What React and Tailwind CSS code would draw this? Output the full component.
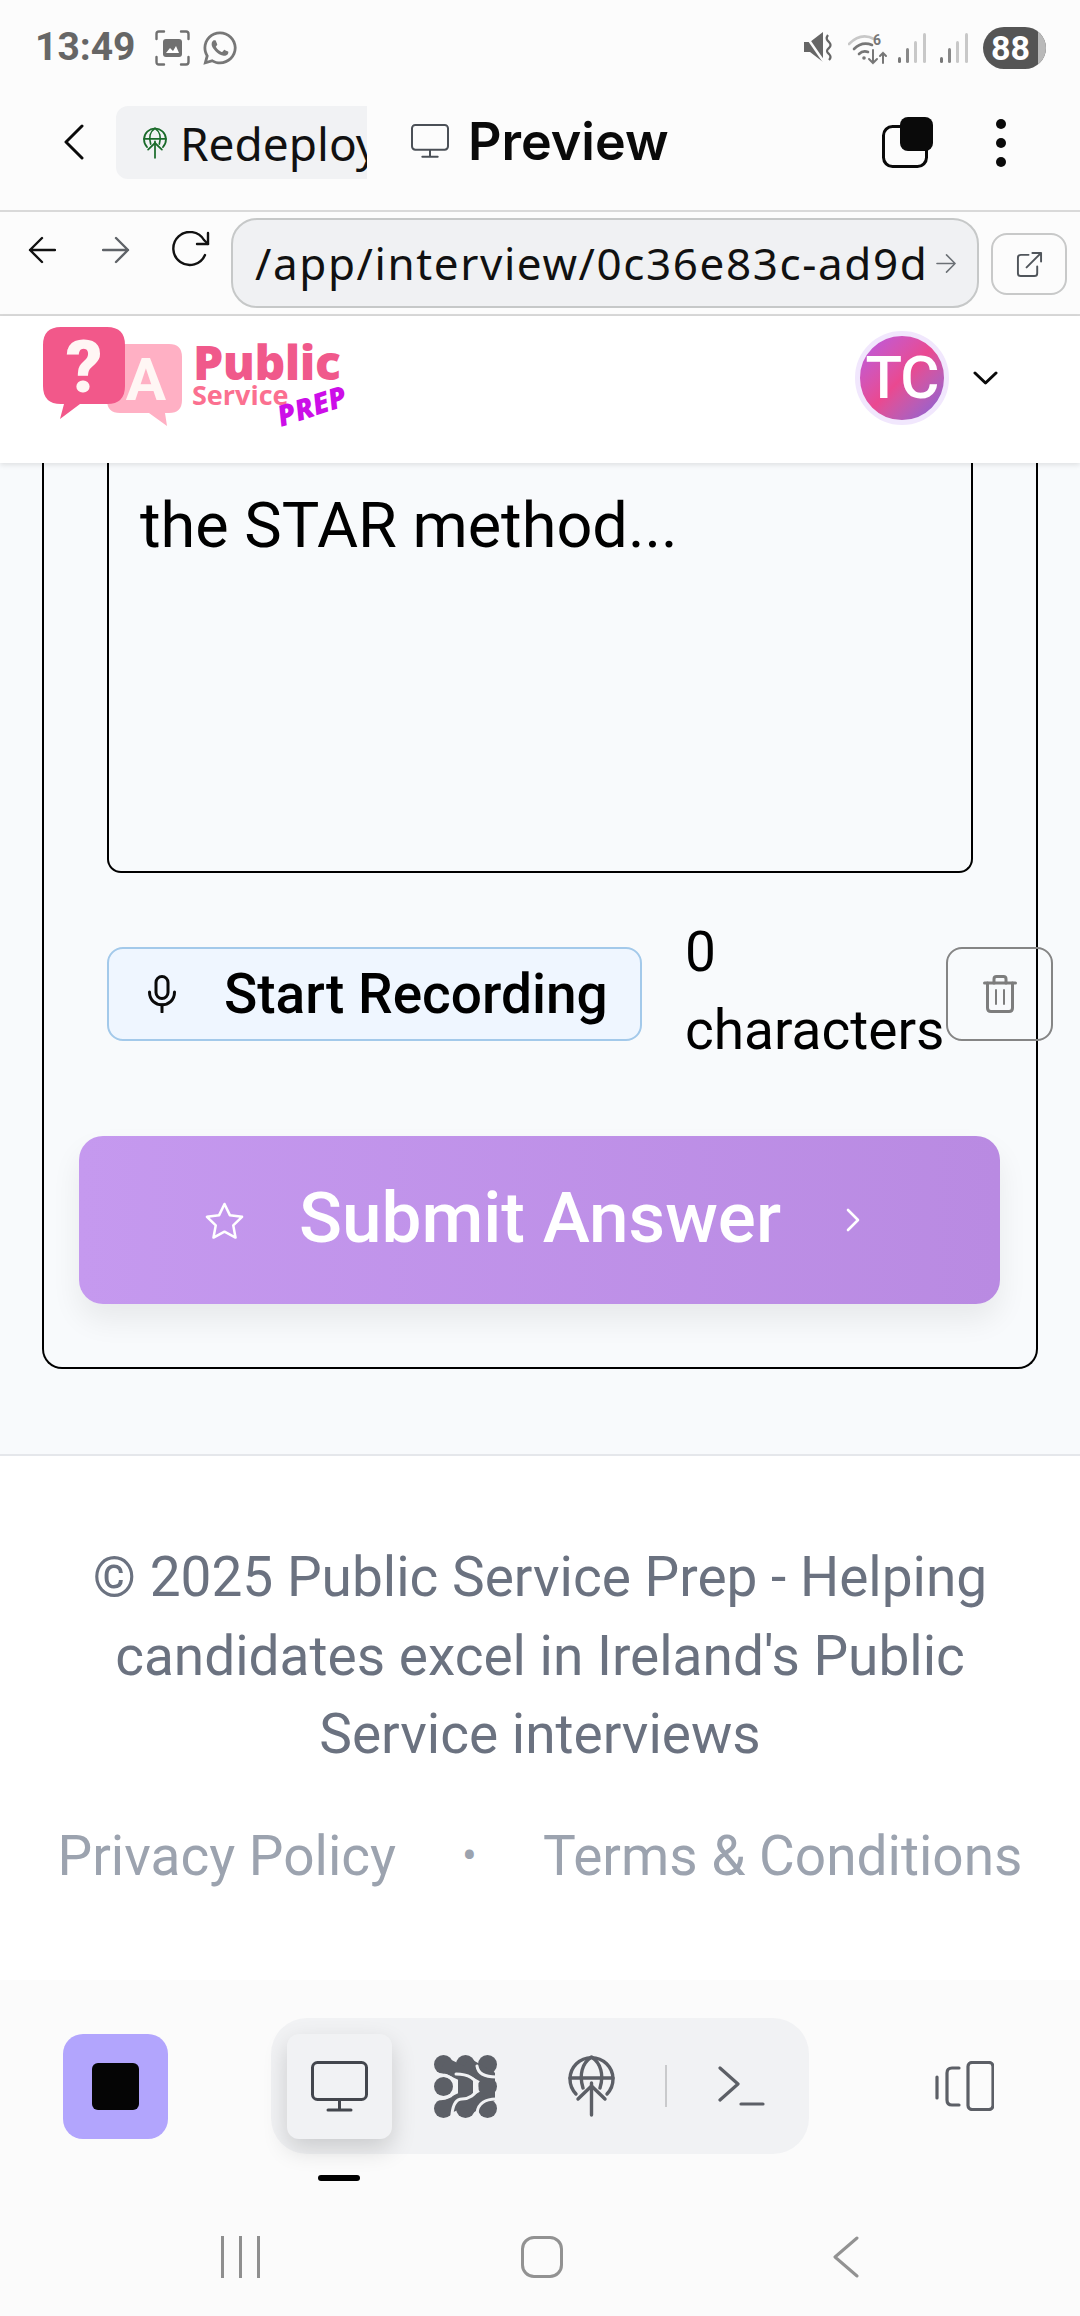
import React from 'react';
import { FaWhatsapp } from 'react-icons/fa';

const GlobeUp = ({ color, className }) => (
  <svg viewBox="0 0 47 62" className={className} fill="none" stroke={color} strokeWidth="3.4" strokeLinecap="round" strokeLinejoin="round">
    <path d="M8 39A21.5 21.5 0 1 1 39 39" />
    <path d="M2 23H45" />
    <path d="M15 33C11 20 14 8 23.5 2C33 8 36 20 32 33" />
    <path d="M23.5 60V28" />
    <path d="M10 44L23.5 31L37 44" />
  </svg>
);

const Monitor = ({ color, className, width = 3 }) => (
  <svg viewBox="0 0 57 51" className={className} fill="none" stroke={color} strokeWidth={width} strokeLinecap="round" strokeLinejoin="round">
    <rect x="1.5" y="1.5" width="54" height="37" rx="5" />
    <path d="M28.5 39V48" />
    <path d="M17 49H40" />
  </svg>
);

const StatusBar = () => (
  <div className="h-[70px] flex items-start pt-[27px] pl-[35px]">
    <span className="w-[100px] h-[41px] flex items-center text-[39px] font-bold text-[#666666] whitespace-nowrap font-['Roboto',sans-serif]">13:49</span>
    <svg viewBox="0 0 35 36" className="w-[35px] h-[36px] ml-[20px] mt-[3px]" fill="none" stroke="#707070" strokeWidth="2.4" strokeLinecap="round">
      <path d="M1.5 9V4Q1.5 1.5 4 1.5H9M26 1.5H31Q33.5 1.5 33.5 4V9M33.5 27V32Q33.5 34.5 31 34.5H26M9 34.5H4Q1.5 34.5 1.5 32V27" />
      <rect x="8" y="9" width="19" height="18" rx="3" fill="#707070" stroke="none" />
      <path d="M11 23L15 18L18 21L21 16L24 23Z" fill="#ffffff" stroke="none" />
    </svg>
    <FaWhatsapp className="w-[38px] h-[38px] ml-[11px] mt-[2px] text-[#777777]" />

    <div className="ml-auto flex items-start">
      <svg viewBox="0 0 30 30" className="w-[30px] h-[30px] mt-[5px]" fill="#666666">
        <path d="M0 10H6L19 0V30L6 20H0Z" />
        <path d="M0 1L20 30" stroke="#fcfcfc" strokeWidth="2.5" />
        <path d="M24 3Q21 7 25 10Q28 13 25 16Q21 19 25 22Q28 25 25 28" fill="none" stroke="#666666" strokeWidth="2.2" />
      </svg>
      <svg viewBox="0 0 41 32" className="w-[41px] h-[32px] ml-[14px] mt-[6px]" fill="none" strokeLinecap="round">
        <path d="M1 11Q13 -1 26 6" stroke="#c8c8c8" strokeWidth="2.6" />
        <path d="M6 16Q14 8 24 12" stroke="#777777" strokeWidth="2.6" />
        <path d="M11 21Q15 17 20 19" stroke="#777777" strokeWidth="2.6" />
        <circle cx="16" cy="25" r="1.8" fill="#777777" />
        <text x="25" y="12" fontSize="14" fontWeight="700" fill="#777777" fontFamily="Roboto">6</text>
        <path d="M25 17V30M21 26L25 30L29 26M35 30V20M32 23L35 20L38 23" stroke="#777777" strokeWidth="2" />
      </svg>
      {[0, 1].map((i) => (
        <svg key={i} viewBox="0 0 28 30" className={i === 0 ? 'w-[28px] h-[30px] ml-[9px] mt-[6px]' : 'w-[28px] h-[30px] ml-[14px] mt-[6px]'}>
          <rect x="0" y="24" width="3" height="6" rx="1.5" fill="#777777" />
          <rect x="8" y="15" width="3" height="15" rx="1.5" fill="#888888" />
          <rect x="16" y="8" width="3" height="22" rx="1.5" fill="#c8c8c8" />
          <rect x="25" y="0" width="3" height="30" rx="1.5" fill="#c8c8c8" />
        </svg>
      ))}
      <div className="ml-[15px] mr-[34px] w-[63px] h-[42px] rounded-full overflow-hidden flex bg-[#555555] relative">
        <span className="w-[55px] h-full flex items-center justify-center text-[34px] font-bold text-white font-['Roboto',sans-serif]">88</span>
        <span className="w-[8px] h-full bg-[#b9b9b9]"></span>
      </div>
    </div>
  </div>
);

const TitleRow = () => (
  <div className="h-[142px] border-b-[2px] border-[#d9d9d9] flex items-center">
    <svg viewBox="0 0 20 36" className="w-[20px] h-[36px] ml-[64px] mt-[4px]" fill="none" stroke="#0a0a0a" strokeWidth="3" strokeLinecap="round" strokeLinejoin="round">
      <path d="M18 2L2 18L18 34" />
    </svg>
    <div className="ml-[32px] w-[251px] h-[73px] mt-[5px] rounded-l-[12px] bg-[#f1f2f4] overflow-hidden flex items-center pl-[27px] shrink-0">
      <GlobeUp color="#1a6b2a" className="w-[24px] h-[32px] shrink-0" />
      <span className="ml-[13px] text-[46px] leading-none text-[#111111] whitespace-nowrap font-['Noto_Sans',sans-serif]">Redeploy</span>
    </div>
    <Monitor color="#4b5057" className="w-[38px] h-[34px] ml-[44px] mt-[2px]" />
    <span className="ml-[19px] mt-[4px] text-[52px] font-semibold leading-none text-[#0a0a0a] font-['Inter',sans-serif]">Preview</span>
    <svg viewBox="0 0 51 51" className="w-[51px] h-[51px] ml-[213px] mt-[4px]">
      <rect x="1.5" y="9.5" width="43" height="40" rx="9" fill="none" stroke="#0a0a0a" strokeWidth="3" />
      <rect x="18" y="0" width="33" height="34" rx="8" fill="#0a0a0a" />
    </svg>
    <div className="ml-[63px] flex flex-col gap-[9px] mt-[5px]">
      <span className="w-[10px] h-[10px] rounded-full bg-[#0a0a0a]"></span>
      <span className="w-[10px] h-[10px] rounded-full bg-[#0a0a0a]"></span>
      <span className="w-[10px] h-[10px] rounded-full bg-[#0a0a0a]"></span>
    </div>
  </div>
);

const UrlRow = () => (
  <div className="h-[104px] border-b-[2px] border-[#d9d9d9] flex items-center">
    <svg viewBox="0 0 28 28" className="w-[28px] h-[28px] ml-[28px] -mt-[26px]" fill="none" stroke="#111111" strokeWidth="2.4" strokeLinecap="round" strokeLinejoin="round">
      <path d="M27 14H2M14 2L2 14L14 26" />
    </svg>
    <svg viewBox="0 0 28 28" className="w-[28px] h-[28px] ml-[46px] -mt-[26px]" fill="none" stroke="#5f6368" strokeWidth="2.4" strokeLinecap="round" strokeLinejoin="round">
      <path d="M1 14H26M14 2L26 14L14 26" />
    </svg>
    <svg viewBox="0 0 38 36" className="w-[38px] h-[36px] ml-[42px] -mt-[28px]" fill="none" stroke="#111111" strokeWidth="2.4" strokeLinecap="round" strokeLinejoin="round">
      <path d="M33 24A16.5 16.5 0 1 1 32 9L36 13" />
      <path d="M36 2V13H25" />
    </svg>
    <div className="ml-[21px] w-[748px] h-[90px] rounded-[26px] border-[2px] border-[#c6c8c8] bg-[#f0f1f3] flex items-center pl-[22px] shrink-0">
      <span className="text-[44px] leading-none tracking-[1.6px] text-[#111111] whitespace-nowrap font-['Noto_Sans',sans-serif]">/app/interview/0c36e83c-ad9d</span>
      <svg viewBox="0 0 22 22" className="w-[21px] h-[21px] ml-auto mr-[20px]" fill="none" stroke="#6b7075" strokeWidth="1.6" strokeLinecap="round" strokeLinejoin="round">
        <path d="M1 11H20M11 2L20 11L11 20" />
      </svg>
    </div>
    <div className="ml-[12px] w-[76px] h-[62px] mt-[2px] rounded-[16px] border-[2px] border-[#c8c9c9] flex items-center justify-center shrink-0">
      <svg viewBox="0 0 28 28" className="w-[27px] h-[27px]" fill="none" stroke="#50555b" strokeWidth="2" strokeLinecap="round" strokeLinejoin="round">
        <path d="M13 4H5Q2 4 2 7V23Q2 26 5 26H19Q22 26 22 23V16" />
        <path d="M11 17L26 2M17 2H26V11" />
      </svg>
    </div>
  </div>
);

const AppHeader = () => (
  <div className="relative z-10 h-[147px] bg-white shadow-[0_2px_5px_rgba(0,0,0,0.1)] flex">
    <svg viewBox="0 0 310 140" className="w-[310px] h-[140px] ml-[43px] mt-[4px]">
      <path d="M77 24H126Q139 24 139 37V80Q139 93 126 93H122L124 106L106 93H77Q64 93 64 80V37Q64 24 77 24Z" fill="#ffb0c4" />
      <text x="103" y="80" textAnchor="middle" fontSize="60" fontWeight="700" fill="#fff6f4" fontFamily="Roboto">A</text>
      <path d="M18 7H64Q82 7 82 25V66Q82 84 64 84H37L17 99L21 84H18Q0 84 0 66V25Q0 7 18 7Z" fill="#f2588a" />
      <text x="41" y="72" textAnchor="middle" fontSize="72" fontWeight="900" fill="#fff6f4" fontFamily="Roboto">?</text>
      <text x="150" y="60" fontSize="48" fontWeight="800" fill="#f0598b" fontFamily="'Open Sans'" letterSpacing="-0.5">Public</text>
      <text x="149" y="85" fontSize="27" fontWeight="700" fill="#fb7090" fontFamily="'Open Sans'">Service</text>
      <text x="238" y="107" fontSize="29" fontWeight="800" fontStyle="italic" fill="#cc0ee8" fontFamily="'Open Sans'" transform="rotate(-18 238 107)">PREP</text>
    </svg>
    <div className="ml-auto flex items-start pt-[15px]">
      <div className="w-[94px] h-[94px] rounded-full border-[5px] border-[#f1e7fd] bg-gradient-to-br from-[#b658e6] via-[#ea4890] to-[#7f60dc] flex items-center justify-center">
        <span className="text-[60px] font-medium leading-none tracking-[-1px] text-white font-['Roboto',sans-serif]">TC</span>
      </div>
      <svg viewBox="0 0 25 14" className="w-[25px] h-[14px] ml-[24px] mt-[40px] mr-[82px]" fill="none" stroke="#0a0a0a" strokeWidth="3" strokeLinecap="round" strokeLinejoin="round">
        <path d="M2 2L12.5 12L23 2" />
      </svg>
    </div>
  </div>
);

const AnswerCard = () => (
  <div className="h-[991px] bg-[#f8fafc] px-[42px]">
    <div className="h-[906px] border-x-[2px] border-b-[2px] border-black rounded-b-[20px] flex flex-col font-['Roboto',sans-serif]">
      <div className="ml-[63px] w-[866px] h-[410px] border-x-[2px] border-b-[2px] border-black rounded-b-[14px] pl-[31px] pt-[29px] shrink-0">
        <p className="text-[63px] leading-[68px] text-black">the STAR method...</p>
      </div>

      <div className="mt-[74px] ml-[63px] h-[94px] flex items-center shrink-0">
        <button className="w-[535px] h-[94px] rounded-[16px] border-[2px] border-[#a3c9ea] bg-[#eff6ff] flex items-center shrink-0">
          <svg viewBox="0 0 28 38" className="w-[28px] h-[38px] ml-[39px]" fill="none" stroke="#0a0a0a" strokeWidth="3" strokeLinecap="round">
            <rect x="8" y="1.5" width="12" height="22" rx="6" />
            <path d="M1.5 17C1.5 34 26.5 34 26.5 17" />
            <path d="M14 30V37" />
          </svg>
          <span className="ml-[48px] text-[55px] font-medium leading-none text-black whitespace-nowrap">Start Recording</span>
        </button>
        <div className="ml-[43px] -mt-[6px] w-[261px] text-[55px] leading-[78px] text-black shrink-0">0 characters</div>
        <button className="w-[107px] h-[94px] rounded-[16px] border-[2px] border-[#858585] flex items-center justify-center shrink-0">
          <svg viewBox="0 0 34 38" className="w-[34px] h-[38px]" fill="none" stroke="#7d7d7d" strokeWidth="3" strokeLinecap="round" strokeLinejoin="round">
            <path d="M1.5 8H32.5" />
            <path d="M11 8V4Q11 1.5 13.5 1.5H20.5Q23 1.5 23 4V8" />
            <path d="M4.5 8V33Q4.5 36.5 8 36.5H26Q29.5 36.5 29.5 33V8" />
            <path d="M13 15V29M21 15V29" strokeWidth="2" />
          </svg>
        </button>
      </div>

      <button className="mt-[95px] ml-[35px] w-[921px] h-[168px] rounded-[24px] bg-gradient-to-r from-[#c599ef] to-[#b98ae2] shadow-[0_16px_30px_rgba(0,0,0,0.07)] flex items-center justify-center pr-[14px] shrink-0">
        <svg viewBox="0 0 40 38" className="w-[39px] h-[37px]" fill="none" stroke="#ffffff" strokeWidth="2.6" strokeLinejoin="round">
          <path d="M20 2L25.5 13.5L38 15.2L29 24L31.3 36.5L20 30.5L8.7 36.5L11 24L2 15.2L14.5 13.5Z" />
        </svg>
        <span className="ml-[55px] mb-[5px] text-[71px] font-medium leading-none text-white whitespace-nowrap">Submit Answer</span>
        <svg viewBox="0 0 14 24" className="w-[14px] h-[24px] ml-[65px]" fill="none" stroke="#ffffff" strokeWidth="2.6" strokeLinecap="round" strokeLinejoin="round">
          <path d="M2 2L12 12L2 22" />
        </svg>
      </button>
    </div>
  </div>
);

const Footer = () => (
  <div className="h-[526px] bg-white border-t-[2px] border-[#e5e7eb] pt-[82px] font-['Roboto',sans-serif]">
    <p className="px-[70px] text-center text-[55px] leading-[78.5px] text-[#6b7280]">
      © 2025 Public Service Prep - Helping candidates excel in Ireland's Public Service interviews
    </p>
    <div className="mt-[43px] flex justify-center items-center text-[55px] leading-[78px] text-[#9ca3af]">
      <span>Privacy Policy</span>
      <span className="mx-[66px] text-[44px]">•</span>
      <span>Terms &amp; Conditions</span>
    </div>
  </div>
);

const DotsLogo = ({ className }) => (
  <svg viewBox="0 0 63 63" className={className} fill="none">
    <g fill="#5c5f66">
      {[9.5, 31.5, 53.5].map((y) =>
        [9.5, 31.5, 53.5]
          .filter((x) => !(x === 31.5 && y === 31.5))
          .map((x) => <circle key={`${x}-${y}`} cx={x} cy={y} r="9.5" />)
      )}
    </g>
    <path d="M9.5 9.5L31.5 20L31.5 43L9.5 53.5M31.5 9.5L53.5 22L53.5 41L31.5 53.5" stroke="#5c5f66" strokeWidth="15" />
    <path d="M4 20C16 19 21 25 21 32C21 39 16 44 2 44" stroke="#f1f2f4" strokeWidth="3" strokeLinecap="round" />
    <path d="M22 19C34 19 43 24 43 32C43 40 34 44 28 44C22 44 19 50 18 59" stroke="#f1f2f4" strokeWidth="3" strokeLinecap="round" />
    <path d="M43 11C44 18 50 22 62 22" stroke="#f1f2f4" strokeWidth="3" strokeLinecap="round" />
    <path d="M62 44C52 44 44 48 43 58" stroke="#f1f2f4" strokeWidth="3" strokeLinecap="round" />
  </svg>
);

const BottomBar = () => (
  <div className="h-[336px] bg-[#fbfbfb] pt-[38px]">
    <div className="h-[136px] flex items-start pl-[63px]">
      <div className="mt-[16px] w-[105px] h-[105px] rounded-[20px] bg-[#b2a5fd] flex items-center justify-center">
        <span className="w-[47px] h-[47px] rounded-[6px] bg-[#050505]"></span>
      </div>
      <div className="ml-[103px] w-[538px] h-[136px] rounded-[36px] bg-[#f1f2f4] flex items-center pl-[16px]">
        <div className="w-[105px] h-[105px] rounded-[12px] bg-[#f1f2f4] shadow-[0_10px_24px_rgba(0,0,0,0.16)] flex items-center justify-center">
          <Monitor color="#43464d" className="w-[57px] h-[51px]" />
        </div>
        <DotsLogo className="w-[63px] h-[63px] ml-[42px]" />
        <GlobeUp color="#5c5f66" className="w-[47px] h-[62px] ml-[71px]" />
        <span className="ml-[50px] w-[2px] h-[42px] bg-[#c9cacc]"></span>
        <svg viewBox="0 0 47 40" className="w-[47px] h-[40px] ml-[51px]" fill="none" stroke="#5c5f66" strokeWidth="3.2" strokeLinecap="round" strokeLinejoin="round">
          <path d="M2 2L20 18L2 34" />
          <path d="M23 38H45" />
        </svg>
      </div>
      <svg viewBox="0 0 59 50" className="w-[59px] h-[50px] ml-[126px] mt-[43px]" fill="none" stroke="#5c5f66" strokeWidth="3.2" strokeLinecap="round" strokeLinejoin="round">
        <path d="M2 16V37" />
        <path d="M24 7H17Q12 7 12 12V39Q12 44 17 44H24" />
        <rect x="33" y="1.5" width="25" height="47" rx="4" />
      </svg>
    </div>

    <div className="mt-[21px] ml-[318px] w-[42px] h-[6px] rounded-full bg-black"></div>

    <div className="mt-[55px] h-[42px] flex items-center">
      <div className="ml-[221px] flex gap-[15px]">
        <span className="w-[3px] h-[42px] bg-[#8f8f8f]"></span>
        <span className="w-[3px] h-[42px] bg-[#8f8f8f]"></span>
        <span className="w-[3px] h-[42px] bg-[#8f8f8f]"></span>
      </div>
      <span className="ml-[261px] w-[42px] h-[42px] rounded-[13px] border-[3px] border-[#929292]"></span>
      <svg viewBox="0 0 26 42" className="w-[26px] h-[42px] ml-[270px]" fill="none" stroke="#929292" strokeWidth="3" strokeLinecap="round" strokeLinejoin="round">
        <path d="M24 2L2 21L24 40" />
      </svg>
    </div>
  </div>
);

export default function App() {
  return (
    <div className="w-[1080px] h-[2316px] overflow-hidden bg-[#fcfcfc]">
      <StatusBar />
      <TitleRow />
      <UrlRow />
      <AppHeader />
      <AnswerCard />
      <Footer />
      <BottomBar />
    </div>
  );
}
